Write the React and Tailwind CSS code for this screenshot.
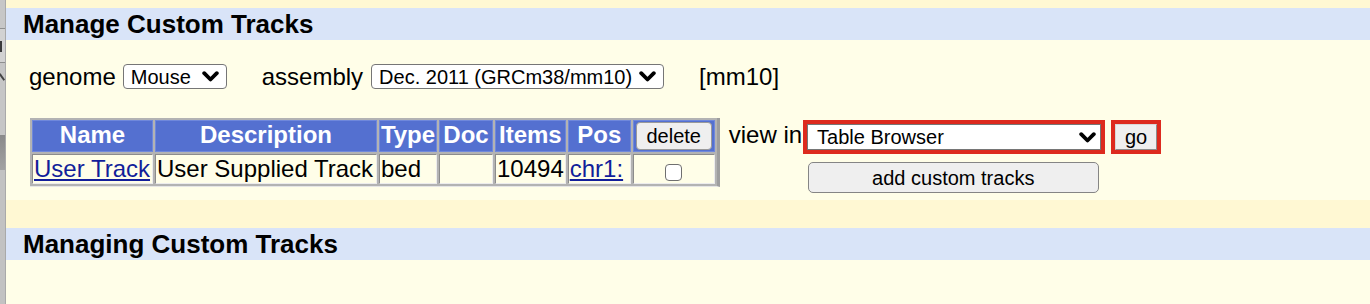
import React from "react";

function Chevron({ className }) {
  return (
    <svg className={className} viewBox="0 0 17 11" width="17" height="11" aria-hidden="true">
      <polyline points="2.2,2.2 8.5,8.5 14.8,2.2" fill="none" stroke="#000" strokeWidth="3.8" strokeLinecap="round" strokeLinejoin="round" />
    </svg>
  );
}

function Th({ className = "", children }) {
  return (
    <th className={"h-[32px] p-0 align-top text-center font-bold text-white text-[24px] leading-[28px] bg-[#5470D0] border border-[#6f88dc] " + className}>
      {children}
    </th>
  );
}

function Td({ className = "", children }) {
  return (
    <td className={"h-[30px] p-0 px-[1px] align-top text-left text-[24px] leading-[28px] bg-[#FFFEE8] border border-t-[#8c8c8c] border-l-[#8c8c8c] border-b-[#ececec] border-r-[#ececec] " + className}>
      {children}
    </td>
  );
}

export default function App() {
  return (
    <div className="flex w-[1370px] h-[304px] overflow-hidden font-['Liberation_Sans',Arial,sans-serif] text-black">
      {/* left edge of a window behind */}
      <div className="relative w-[6px] shrink-0 flex flex-col bg-[#c4c4c4] border-r border-r-[#a9a9a9]">
        <div className="h-[28px] bg-[#c7c7c7]" />
        <div className="h-[1px] bg-[#8f8f8f]" />
        <div className="relative h-[33px] bg-[#d2d2d2]">
          <div className="absolute left-0 top-[12px] w-[2px] h-[11px] bg-[#3a3a3a]" />
        </div>
        <div className="h-[1px] bg-[#8f8f8f]" />
        <div className="relative h-[72px] bg-[#c6c6c6]">
          <div className="absolute left-[1px] top-[10px] w-[2px] h-[8px] bg-[#444] rotate-[-35deg]" />
        </div>
        <div className="h-[35px] bg-gradient-to-b from-[#8a8a8a] to-[#a2a2a2]" />
        <div className="flex-1 bg-[#c2c2c2]" />
      </div>

      <div className="flex-1 flex flex-col bg-[#FFFEE8]">
        <div className="h-[8px] bg-[#FFF8D3]" />
        <div className="h-[32px] bg-[#D9E4F8] pl-[17px] text-[26px] leading-[32px] font-bold">Manage Custom Tracks</div>

        <div className="pl-[24px] pb-[7px]">
          {/* genome / assembly row */}
          <div className="-ml-[1px] mt-[24px] flex items-center h-[25px] text-[24px] leading-[25px]">
            <span>genome</span>
            <div className="ml-[7px] w-[104px] h-[25px] flex items-center justify-between pl-[7px] pr-[7px] bg-white border border-[#767676] rounded-[4px] text-[20px] leading-[22px]">
              <span>Mouse</span>
              <Chevron />
            </div>
            <span className="ml-[35px]">assembly</span>
            <div className="ml-[8px] w-[293px] h-[25px] flex items-center justify-between pl-[7px] pr-[7px] bg-white border border-[#767676] rounded-[4px] text-[20px] leading-[22px]">
              <span>Dec. 2011 (GRCm38/mm10)</span>
              <Chevron />
            </div>
            <span className="ml-[35px]">[mm10]</span>
          </div>

          {/* table + view in */}
          <div className="mt-[29px] flex items-start">
            <table className="table-fixed border-separate border-spacing-[2px] bg-[#b3b3b3] border-r-[3px] border-r-[#9e9e9e] border-b border-b-[#e6e6e6]">
              <thead>
                <tr>
                  <Th className="w-[121px]">Name</Th>
                  <Th className="w-[222px]">Description</Th>
                  <Th className="w-[58px]">Type</Th>
                  <Th className="w-[54px]">Doc</Th>
                  <Th className="w-[70px]">Items</Th>
                  <Th className="w-[63px]">Pos</Th>
                  <th className="w-[82px] h-[32px] p-0 align-top bg-[#5470D0] border border-[#6f88dc]">
                    <div className="mx-[2px] mt-[1px] h-[28px] flex items-center justify-center bg-[#EFEFEF] border border-[#9a9a9a] rounded-[4px] text-[20px] font-normal text-black leading-[22px]">
                      delete
                    </div>
                  </th>
                </tr>
              </thead>
              <tbody>
                <tr>
                  <Td>
                    <a href="#" className="text-[#121E9A] underline decoration-[#121E9A]">User Track</a>
                  </Td>
                  <Td>User Supplied Track</Td>
                  <Td>bed</Td>
                  <Td />
                  <Td>10494</Td>
                  <Td>
                    <a href="#" className="text-[#121E9A] underline decoration-[#121E9A]">chr1:</a>
                  </Td>
                  <Td className="text-center">
                    <div className="flex justify-center pt-[9px]">
                      <span className="block w-[17px] h-[17px] bg-white border border-[#6f6f6f] rounded-[4px]" />
                    </div>
                  </Td>
                </tr>
              </tbody>
            </table>

            <div className="ml-[9px] pt-[2px] flex flex-col">
              <div className="flex items-start">
                <span className="mt-[1px] text-[24px] leading-[28px]">view in</span>
                <div className="ml-[1px] border-[4px] border-[#DD2A1E]">
                  <div className="w-[294px] h-[26px] flex items-center justify-between pl-[9px] pr-[4px] bg-white border border-[#767676] text-[20px] leading-[22px]">
                    <span>Table Browser</span>
                    <Chevron />
                  </div>
                </div>
                <div className="ml-[6px] border-[4px] border-[#DD2A1E]">
                  <div className="w-[42px] h-[26px] flex items-center justify-center bg-[#EFEFEF] border border-t-[#d8d8d8] border-l-[#d8d8d8] border-b-[#8d8d8d] border-r-[#8d8d8d] text-[20px] leading-[22px]">
                    go
                  </div>
                </div>
              </div>
              <div className="ml-[79px] mt-[8px] w-[291px] h-[31px] flex items-center justify-center bg-[#EFEFEF] border border-[#858585] rounded-[5px] text-[20px] leading-[22px]">
                add custom tracks
              </div>
            </div>
          </div>
        </div>

        <div className="h-[28px] bg-[#FFF8D3]" />
        <div className="h-[32px] bg-[#D9E4F8] pl-[17px] text-[26px] leading-[32px] font-bold">Managing Custom Tracks</div>
        <div className="flex-1" />
      </div>
    </div>
  );
}
